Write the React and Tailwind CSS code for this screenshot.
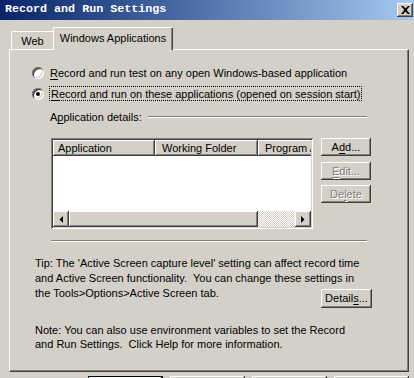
import React from "react";

const RAISED =
  "bg-[#d4d0c8] shadow-[inset_-1px_-1px_0_#404040,inset_1px_1px_0_#ffffff,inset_-2px_-2px_0_#808080,inset_2px_2px_0_#d4d0c8]";
const SUNKEN =
  "shadow-[inset_1px_1px_0_#808080,inset_-1px_-1px_0_#ffffff,inset_2px_2px_0_#404040,inset_-2px_-2px_0_#d4d0c8]";

function U({ children }) {
  return <span className="underline underline-offset-[2px] decoration-1">{children}</span>;
}

function Radio({ checked }) {
  return (
    <div className={`w-[12px] h-[12px] rounded-full bg-white shrink-0 flex items-center justify-center ${SUNKEN}`}>
      {checked && <div className="w-[4px] h-[4px] rounded-full bg-black" />}
    </div>
  );
}

function Button({ children, disabled }) {
  return (
    <div
      className={`${RAISED} w-[50px] h-[18px] flex items-center justify-center ${
        disabled ? "text-[#808080] [text-shadow:1px_1px_0_#ffffff]" : "text-black"
      }`}
    >
      {children}
    </div>
  );
}

function Arrow({ dir }) {
  return (
    <div className={`${RAISED} w-[16px] h-[16px] shrink-0 flex items-center justify-center`}>
      <svg width="4" height="7" viewBox="0 0 4 7">
        {dir === "left" ? <path d="M4 0V7L0.5 3.5Z" fill="black" /> : <path d="M0 0V7L3.5 3.5Z" fill="black" />}
      </svg>
    </div>
  );
}

export default function App() {
  return (
    <div className="w-[414px] h-[378px] overflow-hidden bg-[#d4d0c8] text-[11px] leading-[14px] text-black font-['Liberation_Sans',Arial,sans-serif] flex flex-col">
      {/* Title bar */}
      <div className="h-[20px] shrink-0 flex items-center justify-between pl-[5px] pr-[1px] bg-linear-to-r from-[#0a246a] to-[#a6caf0]">
        <span className="text-white font-bold text-[11.7px] leading-none font-['Liberation_Mono',monospace]">
          Record and Run Settings
        </span>
        <div className={`${RAISED} w-[16px] h-[14px] flex items-center justify-center`}>
          <svg width="9" height="8" viewBox="0 0 9 8">
            <path d="M0 0H2.2L4.5 2.6 6.8 0H9L5.6 4 9 8H6.8L4.5 5.4 2.2 8H0L3.4 4Z" fill="black" />
          </svg>
        </div>
      </div>

      {/* Tabs */}
      <div className="flex items-end pl-[11px] mt-[7px] h-[23px] shrink-0 relative z-10">
        <div className="w-[42px] h-[18px] mb-[1px] flex items-center justify-center pt-[1px] border-t border-l border-white rounded-tl-[2px] bg-[#d4d0c8]">
          Web
        </div>
        <div className="w-[120px] h-[23px] flex items-center justify-center pb-[2px] border-t border-l border-white border-r border-r-[#404040] rounded-t-[2px] bg-[#d4d0c8] shadow-[inset_-1px_0_0_#808080]">
          Windows Applications
        </div>
      </div>

      {/* Panel */}
      <div className="ml-[9px] w-[400px] h-[323px] -mt-[1px] shrink-0 border-t border-l border-white border-r border-b border-r-[#404040] border-b-[#404040] shadow-[inset_-1px_-1px_0_#808080] flex flex-col">
        {/* Radio 1 */}
        <div className="flex items-center h-[14px] mt-[16px] ml-[22px]">
          <Radio />
          <span className="ml-[6px] whitespace-nowrap">
            <U>R</U>ecord and run test on any open Windows-based application
          </span>
        </div>
        {/* Radio 2 */}
        <div className="flex items-center h-[15px] mt-[6px] ml-[22px]">
          <Radio checked />
          <span className="ml-[5px] h-[15px] px-[1px] border border-dotted border-black flex items-center whitespace-nowrap">
            <U>R</U>ecord and run on these applications (opened on session start)
          </span>
        </div>
        {/* Application details */}
        <div className="flex items-center h-[14px] mt-[9px] ml-[40px] w-[317px]">
          <span className="whitespace-nowrap">
            A<U>p</U>plication details:
          </span>
          <div className="flex-1 ml-[6px] h-[2px] border-t border-[#808080] border-b border-b-white" />
        </div>
        {/* List + buttons */}
        <div className="flex mt-[14px] ml-[41px]">
          <div className={`w-[262px] h-[91px] p-[2px] bg-white flex flex-col ${SUNKEN}`}>
            <div className="h-[16px] flex shrink-0 overflow-hidden">
              <div className={`${RAISED} w-[102px] shrink-0 pl-[5px] flex items-center`}>Application</div>
              <div className={`${RAISED} w-[103px] shrink-0 pl-[7px] flex items-center`}>Working Folder</div>
              <div className="w-[53px] shrink-0 overflow-hidden bg-[#d4d0c8] shadow-[inset_0_-1px_0_#404040,inset_1px_1px_0_#ffffff,inset_0_-2px_0_#808080]">
                <div className="w-[53px] h-[16px] pl-[7px] flex items-center whitespace-nowrap overflow-hidden">Program A</div>
              </div>
            </div>
            <div className="flex-1 bg-white" />
            <div className="h-[16px] flex shrink-0">
              <Arrow dir="left" />
              <div className={`${RAISED} w-[189px] shrink-0`} />
              <div className="flex-1 bg-[image:repeating-conic-gradient(#ffffff_0_25%,#d4d0c8_0_50%)] bg-[length:2px_2px]" />
              <Arrow dir="right" />
            </div>
          </div>
          <div className="ml-[8px] flex flex-col">
            <Button>
              A<U>d</U>d...
            </Button>
            <div className="mt-[6px]">
              <Button disabled>
                <U>E</U>dit...
              </Button>
            </div>
            <div className="mt-[5px]">
              <Button disabled>
                De<U>l</U>ete
              </Button>
            </div>
          </div>
        </div>
        {/* Separator */}
        <div className="mt-[11px] ml-[41px] w-[316px] h-[2px] border-t border-[#808080] border-b border-b-white" />
        {/* Tip */}
        <div className="mt-[14px] ml-[25px] w-[337px] leading-[15px]">
          <div className="whitespace-nowrap">Tip: The 'Active Screen capture level' setting can affect record time</div>
          <div className="whitespace-nowrap">and Active Screen functionality.&nbsp; You can change these settings in</div>
          <div className="flex items-start">
            <span className="whitespace-nowrap">the Tools&gt;Options&gt;Active Screen tab.</span>
            <div className={`${RAISED} ml-auto mt-[3px] w-[51px] h-[19px] flex items-center justify-center`}>
              <span>
                Detail<U>s</U>...
              </span>
            </div>
          </div>
        </div>
        {/* Note */}
        <div className="mt-[15px] ml-[25px] leading-[14px]">
          <div className="whitespace-nowrap">Note: You can also use environment variables to set the Record</div>
          <div className="whitespace-nowrap">and Run Settings.&nbsp; Click Help for more information.</div>
        </div>
      </div>

      {/* Bottom buttons (clipped) */}
      <div className="flex mt-[4px] ml-[88px] gap-[7px] shrink-0">
        <div className="w-[75px] h-[23px] border border-black">
          <div className={`${RAISED} w-full h-full`} />
        </div>
        <div className={`${RAISED} w-[75px] h-[23px]`} />
        <div className={`${RAISED} w-[75px] h-[23px]`} />
        <div className={`${RAISED} w-[75px] h-[23px]`} />
      </div>
    </div>
  );
}
